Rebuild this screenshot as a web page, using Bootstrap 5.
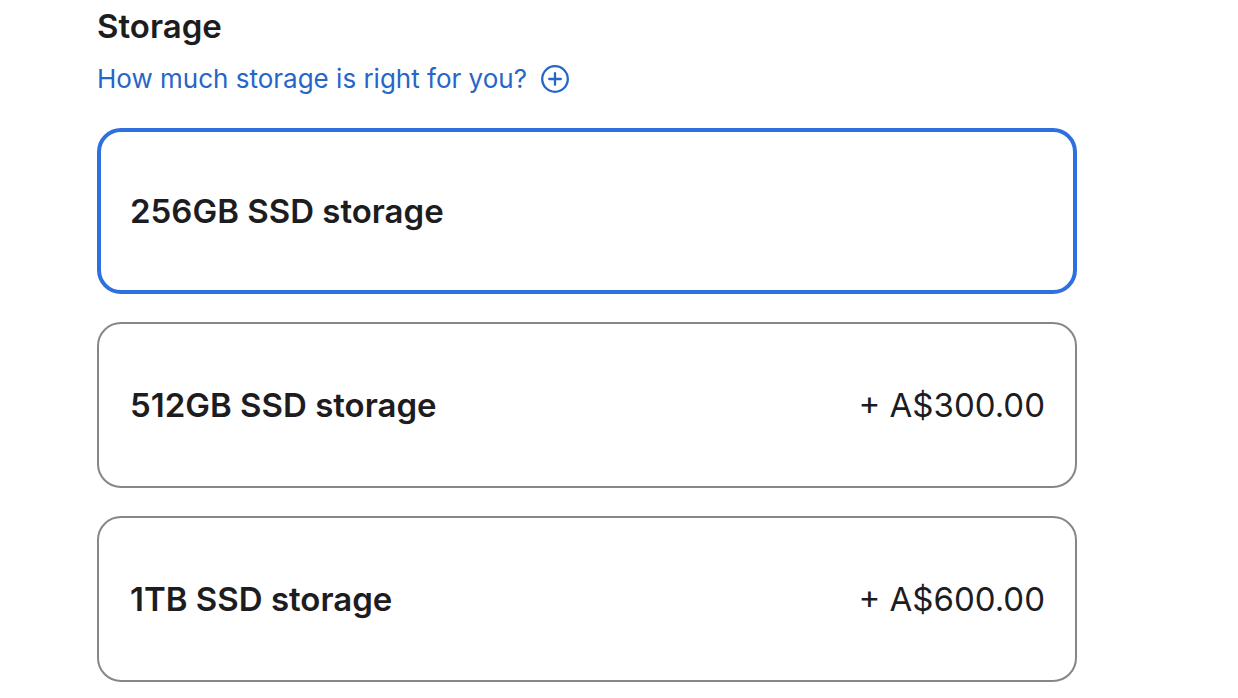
<!DOCTYPE html>
<html lang="en-AU">
<head>
<meta charset="utf-8">
<meta name="viewport" content="width=device-width, initial-scale=1">
<title>Storage</title>
<link href="https://cdn.jsdelivr.net/npm/bootstrap@5.3.0/dist/css/bootstrap.min.css" rel="stylesheet">
<style>
body { font-family: Inter, "Liberation Sans", sans-serif; color: #1d1d1f; background: #fff; }
.storage-form { margin-left: 97px; margin-right: 161px; padding-top: 6px; }
.storage-title { font-size: 33px; line-height: 40px; font-weight: 600; }
.help-link { font-size: 26px; line-height: 34px; color: #2766c8; margin-top: 16px; gap: 13px; }
.help-link:hover { color: #2766c8; }
.option-list { gap: 28px; margin-top: 32px; }
.option-card { min-height: 166px; padding: 0 30px 0 31px; border: 2px solid #86868b; border-radius: 24px; font-size: 33px; line-height: 40px; cursor: pointer; }
.btn-check:checked + .option-card { border: 4px solid #2d70de; padding: 0 28px 0 29px; }
.option-name { font-weight: 600; }
</style>
</head>
<body>
<main>
<form class="storage-form">
  <h2 class="storage-title mb-0">Storage</h2>
  <a href="#guide" class="help-link d-inline-flex align-items-center text-decoration-none">How much storage is right for you?
    <svg width="30" height="30" viewBox="0 0 30 30" fill="none" stroke="currentColor" stroke-width="2.3" stroke-linecap="round" aria-hidden="true"><circle cx="15" cy="15" r="12.8"/><path d="M15 9.2v11.6M9.2 15h11.6"/></svg>
  </a>
  <div class="option-list d-flex flex-column" role="radiogroup" aria-label="Storage">
    <div>
      <input class="btn-check" type="radio" name="storage" id="s256" checked>
      <label class="option-card d-flex align-items-center justify-content-between" for="s256"><span class="option-name">256GB SSD storage</span></label>
    </div>
    <div>
      <input class="btn-check" type="radio" name="storage" id="s512">
      <label class="option-card d-flex align-items-center justify-content-between" for="s512"><span class="option-name">512GB SSD storage</span><span>+ A$300.00</span></label>
    </div>
    <div>
      <input class="btn-check" type="radio" name="storage" id="s1tb">
      <label class="option-card d-flex align-items-center justify-content-between" for="s1tb"><span class="option-name">1TB SSD storage</span><span>+ A$600.00</span></label>
    </div>
  </div>
</form>
</main>
<script src="https://cdn.jsdelivr.net/npm/bootstrap@5.3.0/dist/js/bootstrap.bundle.min.js"></script>
</body>
</html>
